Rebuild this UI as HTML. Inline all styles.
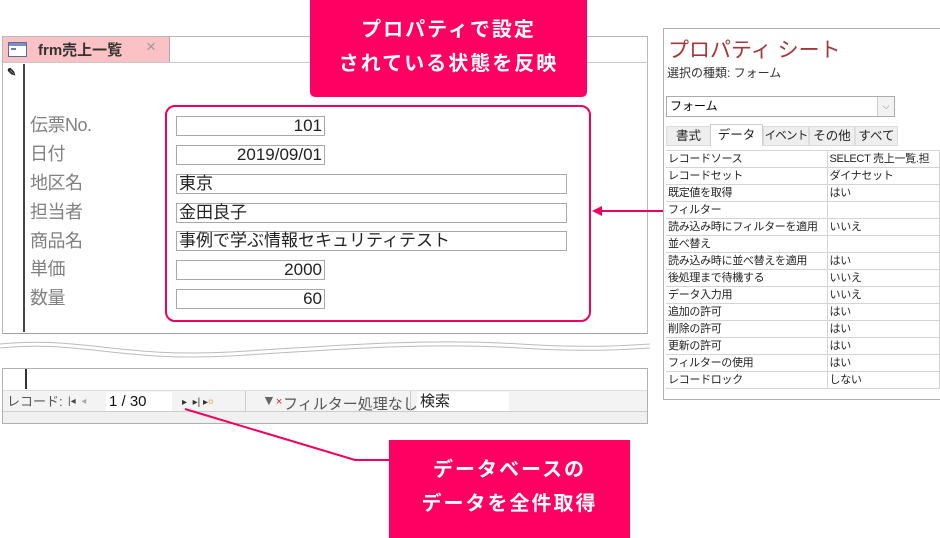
<!DOCTYPE html>
<html><head><meta charset="utf-8"><style>
*{margin:0;padding:0;box-sizing:border-box}
body{width:940px;height:538px;background:#fff;position:relative;overflow:hidden;font-family:"Liberation Sans","Noto Sans CJK JP",sans-serif}
.a{position:absolute}
.lbl{position:absolute;left:30px;font-size:18px;color:#808080;line-height:20px;letter-spacing:-0.5px}
.in{position:absolute;left:176px;height:20px;border:1px solid #a8a8a8;font-size:17px;line-height:18px;color:#222;padding:0 2px}
.num{width:149px;text-align:right}
.txt{width:391px}
.call{position:absolute;background:#ff0062;color:#fff;font-weight:bold;font-size:20px;text-align:center;letter-spacing:2px;line-height:34px}
.ps td{border-bottom:1px solid #d4d4d4;border-right:1px solid #d4d4d4;height:17px;font-size:11px;line-height:16px;padding-left:2px;white-space:nowrap;overflow:hidden;color:#222;letter-spacing:-0.3px}
.tab{position:absolute;top:2px;height:20px;background:#eee;border:1px solid #ddd;text-align:center;line-height:18px;white-space:nowrap;font-size:12.5px}
</style></head><body>
<div class="a" style="left:2px;top:36px;width:646px;height:298px;border:1px solid #b8b8b8;border-bottom:1px solid #a0a0a0"></div>
<div class="a" style="left:3px;top:37px;width:167px;height:26px;background:#fbc2c6;border-right:1px solid #aaa"></div>
<div class="a" style="left:8px;top:42px;width:19px;height:15px;border:1px solid #5a6e9a;background:#fff"><div style="height:3px;background:#7b8fc0"></div><div style="margin:2px 2px;height:2px;background:#6b7fb0;width:5px"></div></div>
<div class="a" style="left:38px;top:39px;font-size:15px;font-weight:bold;color:#333">frm売上一覧</div>
<div class="a" style="left:146px;top:37px;font-size:17px;color:#999">×</div>
<div class="a" style="left:3px;top:62px;width:645px;height:1px;background:#c8c8c8"></div>
<div class="a" style="left:7px;top:66px;font-size:11px;color:#222;font-weight:bold">✎</div>
<div class="a" style="left:23px;top:64px;width:2px;height:268px;background:#444"></div>

<div class="lbl" style="top:115px">伝票No.</div>
<div class="lbl" style="top:144px">日付</div>
<div class="lbl" style="top:173px">地区名</div>
<div class="lbl" style="top:202px">担当者</div>
<div class="lbl" style="top:231px">商品名</div>
<div class="lbl" style="top:259px">単価</div>
<div class="lbl" style="top:288px">数量</div>

<div class="in num" style="top:116px">101</div>
<div class="in num" style="top:145px">2019/09/01</div>
<div class="in txt" style="top:174px">東京</div>
<div class="in txt" style="top:203px">金田良子</div>
<div class="in txt" style="top:231px">事例で学ぶ情報セキュリティテスト</div>
<div class="in num" style="top:260px">2000</div>
<div class="in num" style="top:289px">60</div>

<div class="a" style="left:165px;top:105px;width:426px;height:217px;border:2px solid #f0005c;border-radius:10px"></div>

<svg class="a" style="left:0;top:336px" width="650" height="28"><path d="M0 8 C80 0 120 22 230 16 C330 10 420 2 520 8 C580 12 620 10 650 8" fill="none" stroke="#bbb" stroke-width="1"/><path d="M0 12 C80 4 120 26 230 20 C330 14 420 6 520 12 C580 16 620 14 650 12" fill="none" stroke="#bbb" stroke-width="1"/></svg>

<div class="a" style="left:2px;top:368px;width:646px;height:56px;border:1px solid #b0b0b0;background:#f0f0f0"></div>
<div class="a" style="left:3px;top:369px;width:644px;height:21px;background:#fff"></div>
<div class="a" style="left:25px;top:369px;width:2px;height:20px;background:#333"></div>
<div class="a" style="left:3px;top:390px;width:644px;height:22px;background:#f3f3f3;border-bottom:1px solid #ccc;border-top:1px solid #ddd"></div>
<div class="a" style="left:7px;top:394px;font-size:13px;color:#555;line-height:16px">レコード:</div>
<div class="a" style="left:68px;top:394px;font-size:10px;color:#444;line-height:16px">|◂ &nbsp;<span style="color:#aaa">◂</span></div>
<div class="a" style="left:106px;top:392px;width:66px;height:19px;background:#fff;font-size:15px;line-height:19px;padding-left:3px;color:#111">1 / 30</div>
<div class="a" style="left:182px;top:395px;font-size:10px;color:#333;line-height:16px">▸ &nbsp;▸| ▸<span style="color:#e8b060">¤</span></div>
<div class="a" style="left:245px;top:391px;width:1px;height:20px;background:#ccc"></div>
<div class="a" style="left:262px;top:392px;font-size:14px;color:#666">▼<span style="color:#d02020;font-size:11px">×</span></div>
<div class="a" style="left:283px;top:393px;font-size:15px;color:#555">フィルター処理なし</div>
<div class="a" style="left:410px;top:391px;width:1px;height:20px;background:#ccc"></div>
<div class="a" style="left:417px;top:392px;width:92px;height:19px;background:#fff;font-size:15px;line-height:19px;padding-left:3px;color:#222">検索</div>

<svg class="a" style="left:0;top:0" width="940" height="538"><path d="M185 409 L355 460 L390 460" fill="none" stroke="#f0005c" stroke-width="2"/><path d="M600 211 L664 211" stroke="#f0005c" stroke-width="2"/><path d="M592 211 L602 206 L602 216 Z" fill="#f0005c"/></svg>

<div class="call" style="left:310px;top:0;width:277px;height:97px;border-radius:0 0 5px 5px;padding-top:13px">プロパティで設定<br>されている状態を反映</div>
<div class="call" style="left:389px;top:440px;width:241px;height:98px;padding-top:13px">データベースの<br>データを全件取得</div>

<div class="a" style="left:663px;top:28px;width:277px;height:372px;border:1px solid #b0b0b0;border-right:none;background:#fff"></div>
<div class="a" style="left:668px;top:34px;font-size:21px;color:#a3373b">プロパティ シート</div>
<div class="a" style="left:667px;top:64px;font-size:12px;color:#333">選択の種類: フォーム</div>
<div class="a" style="left:666px;top:96px;width:229px;height:21px;border:1px solid #aaa;font-size:12px;line-height:19px;padding-left:3px">フォーム<div style="position:absolute;right:0;top:0;width:17px;height:19px;border-left:1px solid #ccc;background:#f2f2f2;font-size:9px;text-align:center;color:#777">⌵</div></div>
<div class="a" style="left:666px;top:124px;width:230px;height:22px;color:#222">
<span class="tab" style="left:0;width:45px">書式</span>
<span class="tab" style="left:44px;top:0;width:53px;height:22px;background:#fff;border-color:#ccc;border-bottom:none;line-height:20px">データ</span>
<span class="tab" style="left:97px;width:46px;font-size:11.5px;letter-spacing:-0.8px">イベント</span>
<span class="tab" style="left:143px;width:46px">その他</span>
<span class="tab" style="left:189px;width:43px">すべて</span></div>
<table class="a ps" style="left:666px;top:150px;width:274px;border-collapse:collapse;table-layout:fixed;border-top:1px solid #d4d4d4">
<col style="width:161px"><col>
<tr><td>レコードソース</td><td>SELECT 売上一覧.担</td></tr>
<tr><td>レコードセット</td><td>ダイナセット</td></tr>
<tr><td>既定値を取得</td><td>はい</td></tr>
<tr><td>フィルター</td><td></td></tr>
<tr><td>読み込み時にフィルターを適用</td><td>いいえ</td></tr>
<tr><td>並べ替え</td><td></td></tr>
<tr><td>読み込み時に並べ替えを適用</td><td>はい</td></tr>
<tr><td>後処理まで待機する</td><td>いいえ</td></tr>
<tr><td>データ入力用</td><td>いいえ</td></tr>
<tr><td>追加の許可</td><td>はい</td></tr>
<tr><td>削除の許可</td><td>はい</td></tr>
<tr><td>更新の許可</td><td>はい</td></tr>
<tr><td>フィルターの使用</td><td>はい</td></tr>
<tr><td>レコードロック</td><td>しない</td></tr>
</table>
</body></html>
